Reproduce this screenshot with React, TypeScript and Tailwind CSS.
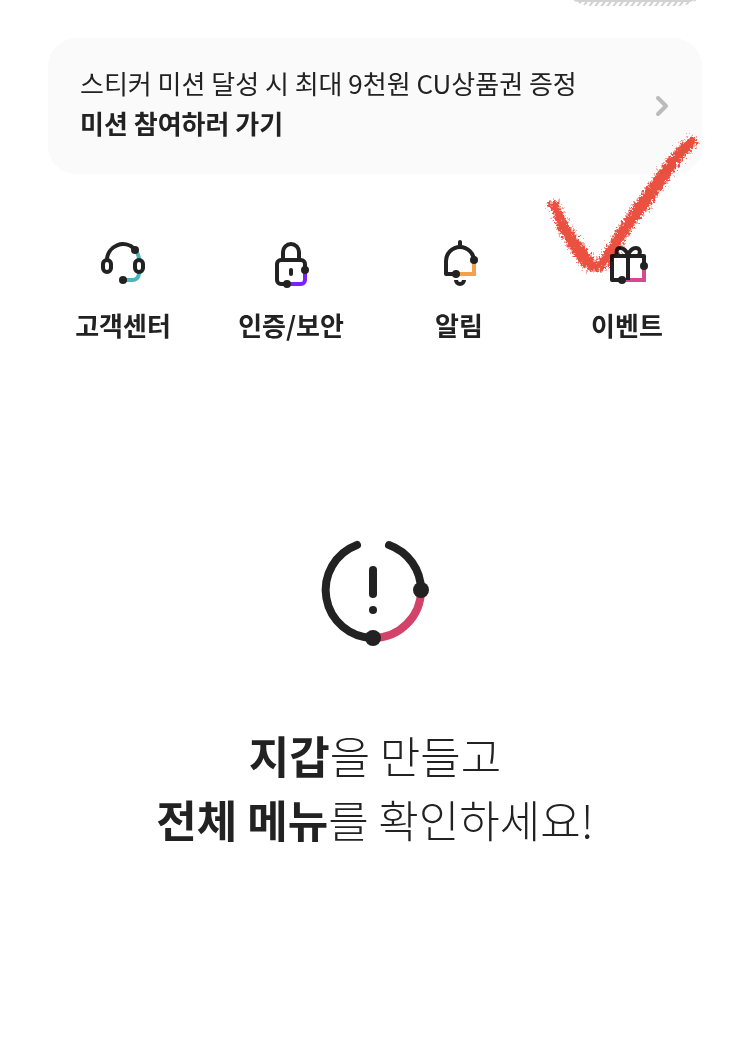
import type { ReactNode } from "react";

const INK = "#222222";

function Icon({ children }: { children: ReactNode }) {
  return (
    <svg
      viewBox="0 0 48 48"
      fill="none"
      stroke={INK}
      strokeWidth={4}
      className="size-12 overflow-visible"
      aria-hidden="true"
    >
      {children}
    </svg>
  );
}

function Dot({ x, y }: { x: number; y: number }) {
  return <circle cx={x} cy={y} r={4} fill={INK} stroke="none" />;
}

function HeadsetIcon() {
  return (
    <Icon>
      <path d="M36 11C39 14 40 17 40 21M40 34C40 38.500 37 41 33 41H24" stroke="#4fb3bf" />
      <path d="M8 21A16 16 0 0 1 35.500 10" />
      <rect x={4} y={21} width={8} height={12} rx={4} />
      <rect x={36} y={21} width={8} height={12} rx={4} />
      <Dot x={36} y={11} />
      <Dot x={24} y={41} />
    </Icon>
  );
}

function LockIcon() {
  return (
    <Icon>
      <path d="M38 31V41A4 4 0 0 1 34 45H20" stroke="#7a1fff" />
      <path d="M20 45H14A4 4 0 0 1 10 41V25A4 4 0 0 1 14 21H34A4 4 0 0 1 38 25V31" />
      <path d="M16 21V13A8 8 0 0 1 32 13V21" />
      <path d="M24 31V35" strokeLinecap="round" />
      <Dot x={38} y={31} />
      <Dot x={20} y={45} />
    </Icon>
  );
}

function BellIcon() {
  return (
    <Icon>
      <path d="M39 21V35H21" stroke="#f5a04c" />
      <path d="M39 22A14 14 0 0 0 11 22V35H21" strokeLinejoin="round" />
      <path d="M25 3V8" strokeLinecap="round" />
      <path d="M21 41A4 4 0 0 0 29 41" />
      <Dot x={39} y={21} />
      <Dot x={21} y={35} />
    </Icon>
  );
}

function GiftIcon() {
  return (
    <Icon>
      <path d="M41 27V41H19" stroke="#d8478f" />
      <path d="M19 41H9V17H41V27" strokeLinejoin="round" />
      <path d="M25 17V41" />
      <path d="M14 16C13 12 14 9 17 9C20 9 23 11 25 16C27 11 30 9 33 9C36 9 38 12 36 16" />
      <Dot x={41} y={27} />
      <Dot x={19} y={41} />
    </Icon>
  );
}

// Crayon tick drawn by hand over the event shortcut
function CrayonCheck() {
  const outline =
    "M17 79L26 76L33 93L43 109L56 127L66 138L74 127L86 106L102 83L122 55L138 34L151 19L161 12L165 17L158 25L147 39L134 58L116 83L100 103L89 121L79 137L71 145L60 146L49 138L38 121L27 103L22 85Z";

  return (
    <svg
      viewBox="0 0 180 170"
      width={180}
      height={170}
      className="pointer-events-none absolute bottom-[50px] left-1/2 -translate-x-24 overflow-visible mix-blend-multiply"
      fill="#eb5140"
      stroke="#eb5140"
      aria-hidden="true"
    >
      <defs>
        <filter id="crayon" x="-10%" y="-10%" width="120%" height="120%" colorInterpolationFilters="sRGB">
          <feTurbulence type="fractalNoise" baseFrequency="0.4" numOctaves={3} seed={4} result="noise" />
          <feDisplacementMap in="SourceGraphic" in2="noise" scale={11} xChannelSelector="R" yChannelSelector="G" />
        </filter>
        <filter id="crayon-dust" x="-10%" y="-10%" width="120%" height="120%" colorInterpolationFilters="sRGB">
          <feTurbulence type="fractalNoise" baseFrequency="0.4" numOctaves={3} seed={9} result="noise" />
          <feDisplacementMap in="SourceGraphic" in2="noise" scale={16} xChannelSelector="R" yChannelSelector="G" />
        </filter>
      </defs>
      <path d={outline} filter="url(#crayon-dust)" strokeWidth={2} opacity={0.5} />
      <path d={outline} filter="url(#crayon)" strokeWidth={1} />
    </svg>
  );
}

function AlertIcon() {
  return (
    <svg viewBox="0 0 112 112" className="size-28" fill="none" stroke={INK} strokeWidth={8} strokeLinecap="round" aria-hidden="true">
      <path d="M102 56A48 48 0 0 1 54 104" stroke="#d34369" />
      <path d="M38 11A48 48 0 0 0 54 104" />
      <path d="M70 11A48 48 0 0 1 102 56" />
      <path d="M54 36V60" />
      <circle cx={54} cy={76} r={4} fill={INK} stroke="none" />
      <circle cx={102} cy={56} r={8} fill={INK} stroke="none" />
      <circle cx={54} cy={104} r={8} fill={INK} stroke="none" />
    </svg>
  );
}

const shortcuts = [
  { name: "고객센터", icon: <HeadsetIcon /> },
  { name: "인증/보안", icon: <LockIcon /> },
  { name: "알림", icon: <BellIcon /> },
  { name: "이벤트", icon: <GiftIcon />, checked: true },
];

export default function App() {
  return (
    <main className="min-h-screen bg-white font-['Noto_Sans_CJK_KR',sans-serif] text-[#222222]">
      {/* Tail of the hatched card above */}
      <div className="flex h-[38px] justify-end pr-[52px]">
        <svg viewBox="0 0 126 8" width={126} height={8} aria-hidden="true">
          <defs>
            <pattern id="hatch" width={6} height={8} patternUnits="userSpaceOnUse">
              <path d="M-2 8L4 0M4 8L10 0" stroke="#cfcfcf" strokeWidth={2} />
            </pattern>
          </defs>
          <path d="M1 0H125C119 4 112 6 104 6H24C14 6 7 4 1 0Z" fill="url(#hatch)" />
          <path d="M1 0H123L118 2H6Z" fill="#d2d2d2" />
        </svg>
      </div>

      <a href="#mission" className="mx-12 flex items-center justify-between rounded-[28px] bg-[#fafafa] px-8 pt-[25px] pb-[31px]">
        <span className="text-[26px] leading-10">
          <span className="block font-normal">스티커 미션 달성 시 최대 9천원 CU상품권 증정</span>
          <strong className="block font-bold">미션 참여하러 가기</strong>
        </span>
        <svg
          viewBox="0 0 16 24"
          width={16}
          height={24}
          fill="none"
          stroke="#bbbbbb"
          strokeWidth={4}
          strokeLinecap="round"
          strokeLinejoin="round"
          className="overflow-visible"
          aria-hidden="true"
        >
          <path d="M4 7L12 15L4 23" />
        </svg>
      </a>

      <nav className="mt-[65px] grid grid-cols-4 px-[39px]">
        {shortcuts.map((item) => (
          <a key={item.name} href="#menu" className="relative flex flex-col items-center gap-[18px]">
            {item.icon}
            <span className="text-[26px] leading-10 font-bold">{item.name}</span>
            {item.checked && <CrayonCheck />}
          </a>
        ))}
      </nav>

      <section className="mt-[189px] flex flex-col items-center pb-20 text-center">
        <AlertIcon />
        <p className="mt-[77px] text-[44px] leading-[64px] font-light">
          <strong className="font-bold">지갑</strong>을 만들고
          <br />
          <strong className="font-bold">전체 메뉴</strong>를 확인하세요!
        </p>
      </section>
    </main>
  );
}
